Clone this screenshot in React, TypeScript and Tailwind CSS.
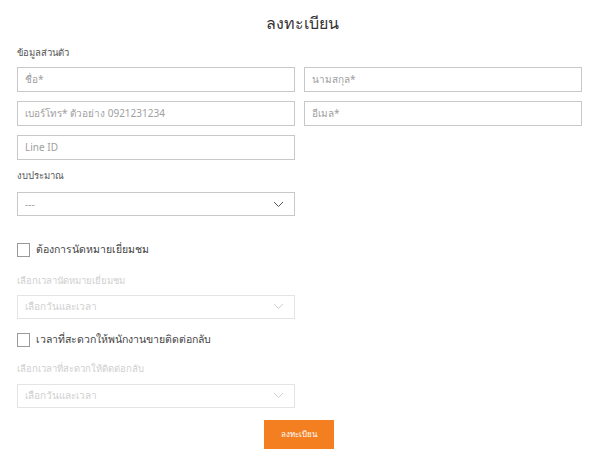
import React from "react";

function Chevron({ light }: { light?: boolean }) {
  return (
    <svg width="11" height="7" viewBox="0 0 11 7" fill="none" className={light ? "text-[#d0d0d0]" : "text-[#555]"}>
      <path d="M1 1l4.5 4.5L10 1" stroke="currentColor" strokeWidth="1" />
    </svg>
  );
}

function Field({ placeholder }: { placeholder: string }) {
  return (
    <div className="h-[25px] border border-[#c8c8c8] flex items-center px-[7px] text-[10px] text-[#a0a0a0]">
      {placeholder}
    </div>
  );
}

function Select({ value, disabled }: { value: string; disabled?: boolean }) {
  return (
    <div
      className={
        "h-[24px] w-[278px] border flex items-center justify-between pl-[7px] pr-[10px] text-[10px] " +
        (disabled ? "border-[#e4e4e4] text-[#cfcfcf]" : "border-[#c8c8c8] text-[#a0a0a0]")
      }
    >
      <span>{value}</span>
      <Chevron light={disabled} />
    </div>
  );
}

function Check({ label }: { label: string }) {
  return (
    <div className="flex items-center gap-[6px]">
      <div className="w-[13px] h-[14px] border border-[#9a9a9a] bg-white" />
      <span className="text-[10.5px] text-[#444]">{label}</span>
    </div>
  );
}

export default function App() {
  return (
    <div
      className="w-[600px] h-[465px] bg-white px-[17px] overflow-hidden"
      style={{ fontFamily: '"Noto Sans", "DejaVu Sans", sans-serif' }}
    >
      <h1 className="text-center text-[16px] text-[#333] pt-[11px] pl-[4px] leading-[24px]">ลงทะเบียน</h1>
      <div className="mt-[11px] text-[9.5px] text-[#555] leading-[14px]">ข้อมูลส่วนตัว</div>

      <div className="mt-[7px] grid grid-cols-[278px_278px] gap-x-[9px] gap-y-[9px]">
        <Field placeholder="ชื่อ*" />
        <Field placeholder="นามสกุล*" />
        <Field placeholder="เบอร์โทร* ตัวอย่าง 0921231234" />
        <Field placeholder="อีเมล*" />
        <Field placeholder="Line ID" />
      </div>

      <div className="mt-[9px] text-[9.5px] text-[#555] leading-[14px]">งบประมาณ</div>
      <div className="mt-[9px]">
        <Select value="---" />
      </div>

      <div className="mt-[26px]">
        <Check label="ต้องการนัดหมายเยี่ยมชม" />
      </div>

      <div className="mt-[16px] text-[9.5px] text-[#cfcfcf] leading-[14px]">เลือกเวลานัดหมายเยี่ยมชม</div>
      <div className="mt-[7px]">
        <Select value="เลือกวันและเวลา" disabled />
      </div>

      <div className="mt-[13px]">
        <Check label="เวลาที่สะดวกให้พนักงานขายติดต่อกลับ" />
      </div>

      <div className="mt-[14px] text-[9.5px] text-[#cfcfcf] leading-[14px]">เลือกเวลาที่สะดวกให้ติดต่อกลับ</div>
      <div className="mt-[8px]">
        <Select value="เลือกวันและเวลา" disabled />
      </div>

      <div className="mt-[12px] flex justify-center">
        <button className="w-[70px] h-[29px] bg-[#f47f20] text-white text-[8px] -ml-[3px]">ลงทะเบียน</button>
      </div>
    </div>
  );
}
